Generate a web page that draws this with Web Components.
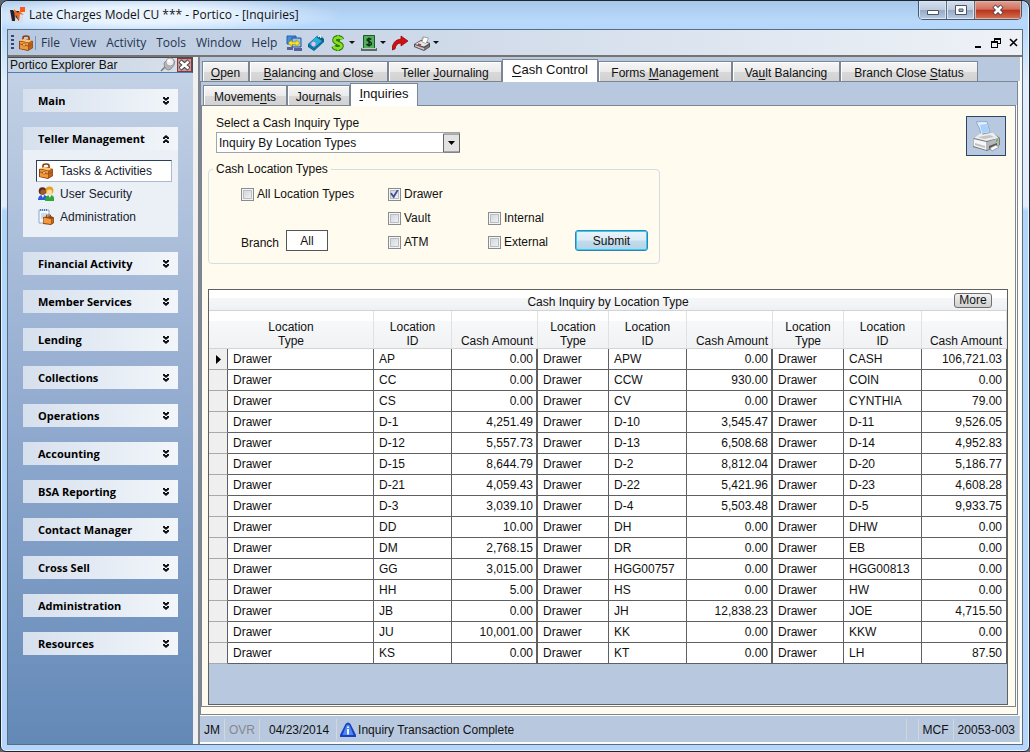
<!DOCTYPE html>
<html lang="en">
<head>
<meta charset="utf-8">
<title>Late Charges Model CU *** - Portico - [Inquiries]</title>
<style>
  html, body { margin: 0; height: 100%; background: #5d6672; }
  body {
    font: 12px/16px "Liberation Sans", Arial, sans-serif; color: #111;
    --ui: "Open Sans", "Noto Sans", sans-serif;
    --blue: #b8c8df; --cream: #fffbef; --line: #7b8593; --grid: #606060;
  }
</style>
</head>
<body>
<portico-window>
  <title-bar slot="title">Late Charges Model CU *** - Portico - [Inquiries]</title-bar>
  <menu-bar slot="menu"></menu-bar>
  <explorer-bar slot="explorer">
    <explorer-group label="Main"></explorer-group>
    <explorer-group label="Teller Management" open>
      <explorer-item selected><app-icon name="case" slot="icon"></app-icon>Tasks &amp; Activities</explorer-item>
      <explorer-item><app-icon name="users" slot="icon"></app-icon>User Security</explorer-item>
      <explorer-item><app-icon name="admin" slot="icon"></app-icon>Administration</explorer-item>
    </explorer-group>
    <explorer-group label="Financial Activity"></explorer-group>
    <explorer-group label="Member Services"></explorer-group>
    <explorer-group label="Lending"></explorer-group>
    <explorer-group label="Collections"></explorer-group>
    <explorer-group label="Operations"></explorer-group>
    <explorer-group label="Accounting"></explorer-group>
    <explorer-group label="BSA Reporting"></explorer-group>
    <explorer-group label="Contact Manager"></explorer-group>
    <explorer-group label="Cross Sell"></explorer-group>
    <explorer-group label="Administration"></explorer-group>
    <explorer-group label="Resources"></explorer-group>
  </explorer-bar>
  <tab-panel class="outer">
    <tab-item slot="tab" style="--w:47px"><u>O</u>pen</tab-item>
    <tab-item slot="tab" style="--w:139px"><u>B</u>alancing and Close</tab-item>
    <tab-item slot="tab" style="--w:114px">Teller <u>J</u>ournaling</tab-item>
    <tab-item slot="tab" style="--w:96px" active><u>C</u>ash Control</tab-item>
    <tab-item slot="tab" style="--w:134px">Forms <u>M</u>anagement</tab-item>
    <tab-item slot="tab" style="--w:108px">Va<u>u</u>lt Balancing</tab-item>
    <tab-item slot="tab" style="--w:138px">Branch Close <u>S</u>tatus</tab-item>
    <tab-panel inner>
      <tab-item slot="tab" style="--w:84px">Moveme<u>n</u>ts</tab-item>
      <tab-item slot="tab" style="--w:63px">Jou<u>r</u>nals</tab-item>
      <tab-item slot="tab" style="--w:68px" active><u>I</u>nquiries</tab-item>
      <inquiry-form></inquiry-form>
      <cash-grid></cash-grid>
    </tab-panel>
  </tab-panel>
  <status-bar slot="status"></status-bar>
</portico-window>

<script>
const ICONS = {
  case: `<path d="M5 5V2.500Q5 1 8 1t3 1.500V5" fill="none" stroke="#8a3a10" stroke-width="1.600"/><path d="M1 6l9-2 5 2v7l-5 3-9-2z" fill="#8f4514"/><path d="M2 6.500l8 1.500v7l-8-1.500z" fill="#f09a3c"/><path d="M10.500 8L14.500 6v6.500L10.500 15z" fill="#bb641f"/><path d="M1.500 5.500L6 4l8.500 1.500-4 2z" fill="#ffc574"/><path d="M2 9l8 2 4.500-2" fill="none" stroke="#a85218"/><path d="M5 8.500h2v2.500H5z" fill="#fff0a0" stroke="#7a3a10" stroke-width=".5"/>`,
  users: `<circle cx="4.500" cy="5" r="3.800" fill="#5b2c17"/><circle cx="5" cy="6" r="2.600" fill="#a8562b"/><path d="M0 14q0-5 5-5t4 5z" fill="#245fd6"/><path d="M3.500 9h2.500l-1 3z" fill="#fff"/><circle cx="11.500" cy="4.500" r="3.900" fill="#e6a41e"/><circle cx="11.500" cy="6" r="2.600" fill="#ffdba0"/><path d="M7 15q0-6 5-6t4 6z" fill="#31a53a"/><path d="M10.500 9h2.500l-1 3z" fill="#fff"/>`,
  admin: `<path d="M1 1h10v13H1z" fill="#f5f9ff" stroke="#8fa8c8"/><path d="M2 1h8" stroke="#4b7cb8" stroke-width="2" stroke-dasharray="1 1"/><path d="M3 5h6M3 7h6M3 9h3" stroke="#a8bcd8"/><path d="M8.500 8V6h4v2" fill="none" stroke="#8f4514"/><path d="M5 8l8-1 3 1.500V14l-3 2-8-1z" fill="#8f4514"/><path d="M5.500 8.500l7.500 1.500v5l-7.500-1z" fill="#f09a3c"/><path d="M13.500 10L15.500 9v4.500l-2 1.500z" fill="#c26a22"/>`,
  logo: `<path d="M0 1h14v15H0z" fill="#d9dfea"/><path d="M1 3h3l3 4V4h3v10L6 9v5H3z" fill="#18243a"/><path d="M5 2l4 4 1-2 5 4-4-1-1 7-3-6-1 5z" fill="#e8691c"/><path d="M11 0h5v5h-5z" fill="#ff5a12"/>`,
  screens: `<path d="M1 1h9v8H1z" fill="#3b8ee0" stroke="#2860a8"/><path d="M6 3h9v9H6z" fill="#8cc6f4" stroke="#2b4f90"/><path d="M1 12h6v3H1zM8 13h8v3H8z" fill="#5662a0"/><path d="M2 8l4-3v2h4V5l4 3-4 3.500V9.500H6v2z" fill="#ffe21d" stroke="#9a8000" stroke-width=".5"/>`,
  phone: `<path d="M9 1l3-1 4 4v3L6 16l-6-4V9z" fill="#0b5f86"/><path d="M8 2l6 4-8 7-5-4z" fill="#29b0d8"/><path d="M1 10l5 4 9-8v1L6 15l-5-3z" fill="#0d80ac"/><circle cx="5.500" cy="9" r="2.200" fill="#fbb6e8"/><path d="M10 2l2-2 1 3" fill="none" stroke="#e8f6ff" stroke-width="1.400"/>`,
  dollar: `<path d="M12 4.500C11 2 5 1.500 4.500 5S12 8 11.500 11 5 14.500 3.500 11" fill="none" stroke="#2b7d12" stroke-width="4.600"/><path d="M8 0v16" stroke="#2b7d12" stroke-width="4"/><path d="M12 4.500C11 2 5 1.500 4.500 5S12 8 11.500 11 5 14.500 3.500 11" fill="none" stroke="#8be01d" stroke-width="2.600"/><path d="M8 .5v3M8 12v3.500" stroke="#8be01d" stroke-width="2"/>`,
  cash: `<path d="M2.500 .5h11v13h-11z" fill="#55ad5e" stroke="#1c5a2a"/><path d="M0 13h16v3H0z" fill="#5d6b66"/><path d="M1 13.500h14" stroke="#c0ccc4"/><path d="M10.300 4.500C9 3 6 3.500 6 5s4.500 1.500 4.500 3.500-3.500 2.500-5 .5M8 2.500v9" fill="none" stroke="#0a2a10" stroke-width="1.300"/>`,
  redo: `<path d="M0 15Q0 5 9 4V1l7 5-7 5V8Q4 8 3 14z" fill="#d40f12" stroke="#8b0005" stroke-width=".7"/>`,
  print: `<path d="M7 7l2-5 5 1-2 6z" fill="#fff" stroke="#777" stroke-width=".7"/><path d="M0 9l7-4 9 3v4l-6 4-10-4z" fill="#4f4f52"/><path d="M1 9l6-3 8 2.500-5 3z" fill="#e6e6e8"/><path d="M8 7l1.500-5 5 1L12 8.500z" fill="#fff" stroke="#888" stroke-width=".6"/><path d="M1 10l9 3v2l-9-3.500z" fill="#c4c4c8"/><path d="M10 13l5-3v2l-5 3z" fill="#777"/><path d="M4 9l3 1" stroke="#d03030" stroke-width="1.500"/>`,
  pin: `<path d="M1 14l5-5" stroke="#777" stroke-width="1.500"/><path d="M4 6l2-2q4-4 7-2t1 6l-3 4q-3 2-5 0T4 6z" fill="#b5b5b8" stroke="#7a7a80" stroke-width=".7"/><circle cx="10" cy="5" r="4" fill="#ececf0" stroke="#909096" stroke-width=".7"/><circle cx="9" cy="4" r="1.500" fill="#fff"/>`,
  info: `<path d="M5.500 2q2.500-3 5 0l5.500 11v2H0v-2z" fill="#1640c4"/><path d="M6.500 3q1.500-1 3 0l4 10h-11z" fill="#4f86f0"/><path d="M8 4.500V6M8 7v5.500" stroke="#fff" stroke-width="1.800"/>`,
  chevrons: `<path d="M5 4h2v1h2V4h2v1.500L8 8 5 5.500zM5 8h2v1h2V8h2v1.500L8 12 5 9.500z" fill="#111"/>`,
};
const define = (tag, html, setup) => {
  const template = document.createElement('template');
  template.innerHTML = html;
  customElements.define(tag, class extends HTMLElement {
    constructor() {
      super();
      this.attachShadow({ mode: 'open' }).append(template.content.cloneNode(true));
    }
    connectedCallback() { if (setup) setup(this, this.shadowRoot); }
  });
};

define('app-icon', `<style>
  :host { display: inline-block; width: var(--size, 16px); height: var(--size, 16px); flex: none; }
  svg { display: block; width: 100%; height: 100%; }
</style><svg viewBox="0 0 16 16" aria-hidden="true"></svg>`,
  (el, root) => { root.querySelector('svg').innerHTML = ICONS[el.getAttribute('name')]; });

define('portico-window', `<style>
  :host {
    display: flex; flex-direction: column; min-height: 100vh; box-sizing: border-box;
    border: 1px solid #1d2530; border-radius: 8px 8px 6px 6px; padding: 0 6px 6px;
    background: linear-gradient(#b3d2f3, #b9dafb 28px, #e2eefb 80px, #e2eefb 205px, #b2d5fa 210px, #b5d6fa);
    box-shadow: inset 0 0 0 1px #e4f3fe;
  }
  .client { flex: 1; display: flex; flex-direction: column; border: 1px solid #586d7e; background: #f0f0f0; }
  .body { flex: 1; display: flex; gap: 5px; }
  .main { flex: 1; min-width: 0; display: flex; flex-direction: column; border-left: 2px solid #80858e; background: #fbfbf8; }
</style>
<slot name="title"></slot>
<div class="client">
  <slot name="menu"></slot>
  <div class="body">
    <slot name="explorer"></slot>
    <main class="main"><slot></slot><slot name="status"></slot></main>
  </div>
</div>`);

define('title-bar', `<style>
  :host { display: flex; height: 28px; margin: 0 -5px; padding-left: 7px; gap: 4px; border-radius: 7px 7px 0 0;
    font: 12px/16px var(--ui); background: radial-gradient(ellipse 200px 20px at 140px 14px, #e9f4ff 40%, transparent), linear-gradient(#a8c8ea, #b9d9fb 70%, #b4d7fd); }
  app-icon { margin-top: 6px; }
  .title { flex: 1; margin-top: 6px; }
  .controls { display: flex; height: 19px; margin-right: 6px; border: 1px solid #46566c; border-top: 0; border-radius: 0 0 5px 5px; overflow: hidden; box-sizing: border-box; }
  button { width: 28px; border: 0; border-right: 1px solid #5b6c83; padding: 0; display: grid; place-items: center;
    background: linear-gradient(#d5e0ee, #bccbdd 48%, #95a9c3 50%, #b8cbe2); box-shadow: inset 0 0 0 1px #dae6f4; }
  button:last-child { width: 46px; border-right: 0; background: linear-gradient(#e3a092, #d0705c 46%, #b8321b 50%, #d67350); box-shadow: inset 0 0 0 1px #e9b0a0; }
  svg { width: 14px; height: 12px; }
</style>
<app-icon name="logo"></app-icon><span class="title"><slot></slot></span>
<div class="controls">
  <button aria-label="Minimize"><svg viewBox="0 0 14 12"><path d="M1.500 6.500h11v4h-11z" fill="#fff" stroke="#4a5568"/></svg></button>
  <button aria-label="Restore"><svg viewBox="0 0 14 12"><path d="M1.500 1.500h11v9h-11zM5 5v2.500h4V5z" fill="#fff" fill-rule="evenodd" stroke="#4a5568"/></svg></button>
  <button aria-label="Close"><svg viewBox="0 0 14 12"><path d="M3 2l8 8M11 2l-8 8" stroke="#50404a" stroke-width="4.500"/><path d="M3.500 2.500l7 7M10.500 2.500l-7 7" stroke="#fff" stroke-width="2.600"/></svg></button>
</div>`);

define('menu-bar', `<style>
  :host { display: flex; align-items: center; height: 25px; padding: 0 2px; border-bottom: 2px solid #77736f;
    font: 12px/16px var(--ui); color: #23344e; background: linear-gradient(90deg, #b8c8df, #eef2f7); }
  .grip { width: 3px; height: 15px; margin: 0 4px 0 1px; background: repeating-linear-gradient(#2f4677 0 2px, transparent 2px 4px); }
  .rule { width: 1px; height: 14px; background: #6f93cc; margin: 0 0 0 1px; }
  nav { display: flex; }
  nav button { font: inherit; color: inherit; border: 0; background: none; padding: 0 5px; }
  .tools { display: flex; align-items: center; gap: 6px; padding-left: 4px; flex: 1; }
  .tools button { display: flex; align-items: center; gap: 3px; border: 0; background: none; padding: 0; }
  .drop::after { content: ""; border: 3px solid transparent; border-top-color: #111; border-bottom: 0; }
  .mdi { display: flex; gap: 5px; }
  .mdi button { border: 0; padding: 0; background: none; width: 12px; height: 12px; }
  .mdi svg { display: block; }
</style>
<div class="grip"></div><app-icon name="case"></app-icon><div class="rule"></div>
<nav><button>File</button><button>View</button><button>Activity</button><button>Tools</button><button>Window</button><button>Help</button></nav>
<div class="tools">
  <button aria-label="Switch terminal"><app-icon name="screens"></app-icon></button>
  <button aria-label="Call"><app-icon name="phone"></app-icon></button>
  <button aria-label="Funds" class="drop"><app-icon name="dollar"></app-icon></button>
  <button aria-label="Cash" class="drop"><app-icon name="cash"></app-icon></button>
  <button aria-label="Forward"><app-icon name="redo"></app-icon></button>
  <button aria-label="Print" class="drop"><app-icon name="print"></app-icon></button>
</div>
<div class="mdi">
  <button aria-label="Minimize child"><svg width="12" height="12"><path d="M1 9h6v2H1z"/></svg></button>
  <button aria-label="Restore child"><svg width="12" height="12"><path d="M3 1h7v6H7v4H0V4h3zM4 3v1h3v2h2V3zM1 6v4h5V6z" fill-rule="evenodd"/></svg></button>
  <button aria-label="Close child"><svg width="12" height="12"><path d="M2 2l7 7M9 2L2 9" stroke="#000" stroke-width="1.600"/></svg></button>
</div>`);

define('explorer-bar', `<style>
  :host { display: flex; flex-direction: column; width: 185px; flex: none; background: linear-gradient(#c5d3e6, #94acd0 50%, #6389b7); }
  header { display: flex; align-items: center; height: 16px; padding-left: 2px; box-sizing: border-box;
    border: 1px solid #4c4c56; border-left: 0; border-bottom-color: #4e7fb5; background: linear-gradient(90deg, #c5d3e4, #d8e0ea); }
  span { flex: 1; }
  button { width: 15px; height: 14px; margin-left: 1px; padding: 0; border: 1px solid #8c3838; background: #c79a9e; }
  svg { display: block; width: 13px; height: 12px; }
  .groups { display: flex; flex-direction: column; gap: 15px; padding: 16px 15px; }
</style>
<header><span>Portico Explorer Bar</span><app-icon name="pin"></app-icon>
<button aria-label="Close explorer bar"><svg viewBox="0 0 13 12"><path d="M2 2l9 8M11 2l-9 8" stroke="#444" stroke-width="4.500"/><path d="M2.500 2.500l8 7M10.500 2.500l-8 7" stroke="#fff" stroke-width="2.500"/></svg></button></header>
<div class="groups"><slot></slot></div>`);

define('explorer-group', `<style>
  :host { display: block; }
  button { display: flex; align-items: center; width: 100%; height: 23px; border: 0; padding: 0 4px 0 15px; color: #000;
    font: bold 11px/16px var(--ui); text-align: left; background: linear-gradient(90deg, #d6e0ed, #f2f6fa); }
  span { flex: 1; }
  .items { display: none; flex-direction: column; gap: 1px; padding: 10px 6px 9px 13px; background: #eaf0f5; }
  :host([open]) .items { display: flex; }
  :host([open]) app-icon { rotate: 180deg; }
</style>
<button><span></span><app-icon name="chevrons"></app-icon></button>
<div class="items"><slot></slot></div>`,
  (el, root) => {
    root.querySelector('span').textContent = el.getAttribute('label');
    const button = root.querySelector('button');
    button.setAttribute('aria-expanded', el.hasAttribute('open'));
    button.onclick = () => button.setAttribute('aria-expanded', el.toggleAttribute('open'));
  });

define('explorer-item', `<style>
  :host { display: block; }
  a { display: flex; align-items: center; gap: 6px; height: 22px; box-sizing: border-box; padding-left: 1px; border: 1px solid transparent; color: #16202e; text-decoration: none; }
  :host([selected]) a { background: #fff; border-color: #2c3f5c #aab8d0 #aab8d0 #2c3f5c; }
</style><a href="#"><slot name="icon"></slot><span><slot></slot></span></a>`);

define('tab-panel', `<style>
  :host { flex: 1; display: flex; flex-direction: column; margin-right: 4px; }
  :host([inner]) { margin: 0 1px 7px 0; }
  .tabs { display: flex; align-items: flex-end; height: 24px; padding-left: 2px; margin-right: -2px; background: var(--blue); }
  :host([inner]) .tabs { height: 23px; margin-right: -1px; }
  .pane { flex: 1; display: flex; flex-direction: column; border: 1px solid var(--line); background: var(--cream); }
</style>
<div class="tabs" role="tablist"><slot name="tab"></slot></div>
<div class="pane"><slot></slot></div>`);

define('tab-item', `<style>
  :host { display: block; width: var(--w); }
  button { display: block; width: 100%; height: 20px; padding: 2px 0 0; font: inherit; color: #111; white-space: nowrap;
    border: solid var(--line); border-width: 1px 1px 0 1px; background: linear-gradient(#f6f6f6, #ebebeb 50%, #d9d9d9 52%, #d2d2d2); box-shadow: inset 1px 1px #fff; }
  :host([active]) button { position: relative; height: 23px; margin-bottom: -1px; padding: 0 0 3px; font-size: 13px; background: #fff; }
  ::slotted(u) { text-underline-offset: 2px; }
</style><button role="tab"><slot></slot></button>`,
  (el, root) => root.querySelector('button').setAttribute('aria-selected', el.hasAttribute('active')));

define('check-option', `<style>
  :host { display: block; }
  label { display: flex; align-items: center; gap: 3px; white-space: nowrap; }
  input { appearance: none; width: 13px; height: 13px; margin: 0; border: 1px solid #8a8d90; display: grid; place-items: center;
    background: linear-gradient(135deg, #cdd1d6, #f6f6f6); box-shadow: inset 0 0 0 1px #f4f4f4, inset 0 0 0 2px #b9bec5; }
  input:checked::after { content: ""; width: 9px; height: 9px; background: #3b4f95; clip-path: polygon(0 45%, 20% 35%, 38% 65%, 80% 0, 100% 0, 42% 100%); }
</style><label><input type="checkbox"><span><slot></slot></span></label>`,
  (el, root) => { root.querySelector('input').checked = el.hasAttribute('checked'); });

define('inquiry-form', `<style>
  :host { display: flex; justify-content: space-between; align-items: flex-start; padding: 9px 9px 25px 6px; }
  .type { display: flex; flex-direction: column; gap: 1px; width: 244px; margin: 0 0 8px 8px; }
  .pick { display: grid; }
  select { appearance: none; grid-area: 1 / 1; height: 21px; padding: 0 20px 0 2px; font: inherit; color: #111; border: 1px solid #a0a5ab; border-radius: 0; background: #fff; }
  .arrow { grid-area: 1 / 1; justify-self: end; align-self: center; width: 17px; height: 20px; pointer-events: none; }
  fieldset { position: relative; width: 452px; height: 103px; box-sizing: border-box; margin: 0; padding: 5px 0 0 32px; border: 1px solid #d3dde6; border-radius: 4px; }
  legend { margin-left: -28px; padding: 0 3px; line-height: 16px; }
  .opts { display: grid; grid-template-columns: 147px 100px 87px 73px; grid-auto-rows: 24px; align-items: center; }
  .branch { display: flex; align-items: flex-start; gap: 7px; align-self: start; grid-area: 3 / 1; }
  .branch span { padding-top: 5px; }
  button { font: inherit; color: #111; padding: 0; }
  .all { width: 42px; height: 21px; background: #fff; border: 1px solid #555; }
  .submit { grid-area: 3 / 4; align-self: start; height: 21px; border: 1px solid #3c7fb1; border-radius: 3px;
    background: linear-gradient(#eaf3f9, #dcebf5 48%, #c3dcec 52%, #b5d2e6); box-shadow: inset 0 0 0 1px #2bd0f7; }
  .print { width: 40px; height: 40px; margin-top: 1px; border: 1px solid #2d4668; background: var(--blue); display: grid; place-items: center; }
</style>
<form onsubmit="return false">
  <div class="type">
    <label for="type">Select a Cash Inquiry Type</label>
    <div class="pick">
      <select id="type"><option>Inquiry By Location Types</option></select>
      <svg class="arrow" viewBox="0 0 17 20" aria-hidden="true"><path d="M.5 1h16v18H.5z" fill="#e2e2e2" stroke="#666"/><path d="M5 8h7l-3.500 4z"/></svg>
    </div>
  </div>
  <fieldset>
    <legend>Cash Location Types</legend>
    <div class="opts">
      <check-option style="grid-area:1/1">All Location Types</check-option>
      <check-option style="grid-area:1/2" checked>Drawer</check-option>
      <check-option style="grid-area:2/2">Vault</check-option>
      <check-option style="grid-area:2/3">Internal</check-option>
      <div class="branch"><span>Branch</span><button class="all">All</button></div>
      <check-option style="grid-area:3/2">ATM</check-option>
      <check-option style="grid-area:3/3">External</check-option>
      <button class="submit">Submit</button>
    </div>
  </fieldset>
</form>
<button class="print" aria-label="Print inquiry"><svg width="32" height="34" viewBox="0 0 32 34">
  <path d="M6 3q6-1 11-.5l3 11-9 2q-1-7-5-12.500z" fill="#dcecfd" stroke="#7c98ba" stroke-width=".7"/><path d="M10 6l7-1 2 8-7 1z" fill="#a9d0f9"/>
  <path d="M3 20l6-5 14-1 7 5v7l-13 6-14-4z" fill="#77797c"/><path d="M4 19l5-4 3-1 .5 1.500 8-1.500 3 0 5 5-12 3z" fill="#eceded"/>
  <path d="M8 18l12-2 4 2-10 2z" fill="#c2c4c6"/><path d="M3.500 20l13 3v8l-13-4z" fill="#f6f6f6"/><path d="M5 24l10 3v2L5 26z" fill="#bfc1c3"/>
  <path d="M17 23l12-4v7l-12 5z" fill="#b5b7ba"/><path d="M19 27l8-3v3l-8 3z" fill="#55585c"/><path d="M20 29l6-3 3 2-7 4z" fill="#fafafa" stroke="#777" stroke-width=".6"/><path d="M26 21l2-1v2l-2 1z" fill="#69b83c"/>
</svg></button>`);

const HEADS = ['Location<br>Type', 'Location<br>ID', 'Cash Amount'];
const ROWS = `AP 0.00 APW 0.00 CASH 106,721.03
CC 0.00 CCW 930.00 COIN 0.00
CS 0.00 CV 0.00 CYNTHIA 79.00
D-1 4,251.49 D-10 3,545.47 D-11 9,526.05
D-12 5,557.73 D-13 6,508.68 D-14 4,952.83
D-15 8,644.79 D-2 8,812.04 D-20 5,186.77
D-21 4,059.43 D-22 5,421.96 D-23 4,608.28
D-3 3,039.10 D-4 5,503.48 D-5 9,933.75
DD 10.00 DH 0.00 DHW 0.00
DM 2,768.15 DR 0.00 EB 0.00
GG 3,015.00 HGG00757 0.00 HGG00813 0.00
HH 5.00 HS 0.00 HW 0.00
JB 0.00 JH 12,838.23 JOE 4,715.50
JU 10,001.00 KK 0.00 KKW 0.00
KS 0.00 KT 0.00 LH 87.50`.split('\n').map(r => r.split(' '));

define('cash-grid', `<style>
  :host { flex: 1; display: block; margin: 0 7px 1px 6px; border: 1px solid var(--grid); background: var(--blue); }
  .top { display: grid; grid-template-columns: 1fr auto 1fr; height: 20px; padding: 0 15px; border-bottom: 1px solid #d2d4d6;
    background: linear-gradient(#fff 8px, #f6f7f9 8px, #eff0f1); }
  h2 { grid-column: 2; margin: 0; font: inherit; line-height: 20px; padding-top: 2px; }
  .top button { justify-self: end; width: 38px; height: 15px; padding: 0; margin-top: 3px; font: inherit; line-height: 13px; color: #111; border: 1px solid #707070; border-radius: 3px; background: linear-gradient(#f2f2f2, #e0e0e0 50%, #d0d0d0); }
  table { width: 100%; table-layout: fixed; border-collapse: separate; border-spacing: 0; }
  .mark { width: 19px; } .wide { width: auto; } .type { width: 71px; } .id { width: 78px; } .amt { width: 86px; } .last { width: 85px; }
  th { box-sizing: border-box; height: 38px; padding: 0; font-weight: normal; line-height: 14px; vertical-align: bottom;
    border-right: 1px solid #dfe1e3; border-bottom: 1px solid #d2d4d6; background: linear-gradient(#fff 10px, #f7f8fa 10px, #f1f2f3); }
  td, tbody th { box-sizing: border-box; height: 21px; padding: 0 5px; line-height: 20px; vertical-align: middle; background: #fff; border: solid var(--grid); border-width: 0 1px 1px 0; }
  td:nth-child(3n+1) { text-align: right; padding: 0 4px; }
  thead th:nth-child(3n) { text-align: right; padding-right: 4px; }
  td:nth-child(4), td:nth-child(7) { border-right-width: 2px; padding-right: 3px; }
  tbody th { padding: 0; background: #efefef; border-bottom-color: #a9a9a9; }
  tbody tr:first-child th svg { display: block; margin: auto; }
</style>
<div class="top"><h2>Cash Inquiry by Location Type</h2><button>More</button></div>
<table aria-label="Cash Inquiry by Location Type">
  <colgroup><col class="mark"><col class="wide"><col class="id"><col class="amt"><col class="type"><col class="id"><col class="amt"><col class="type"><col class="id"><col class="last"></colgroup>
  <thead><tr></tr></thead><tbody></tbody>
</table>`,
  (el, root) => {
    root.querySelector('thead tr').innerHTML = [2, 1, 1].map(span => HEADS.map((h, i) => `<th scope="col" colspan="${i ? 1 : span}">${h}</th>`).join('')).join('');
    root.querySelector('tbody').innerHTML = ROWS.map((r, i) => `<tr><th>${i ? '' : '<svg width="5" height="9"><path d="M0 0l5 4.500L0 9z"/></svg>'}</th>`
      + [0, 2, 4].map(c => `<td>Drawer</td><td>${r[c]}</td><td>${r[c + 1]}</td>`).join('') + '</tr>').join('');
  });

define('status-bar', `<style>
  :host { display: flex; align-items: center; height: 26px; margin: 1px 2px 2px 0; background: var(--blue); }
  span { display: flex; align-items: center; gap: 2px; height: 21px; box-sizing: border-box; padding: 2px 4px 0; border-right: 1px solid #d4d6da; }
  .date { padding-left: 9px; padding-right: 7px; }
  .msg { flex: 1; padding-left: 3px; } .blank { width: 12px; }
</style>
<span>JM</span><span style="color:#85888e">OVR</span><span class="date">04/23/2014</span>
<span class="msg"><app-icon name="info"></app-icon>Inquiry Transaction Complete</span><span class="blank"></span><span>MCF</span><span>20053-003</span>`);
</script>
</body>
</html>
